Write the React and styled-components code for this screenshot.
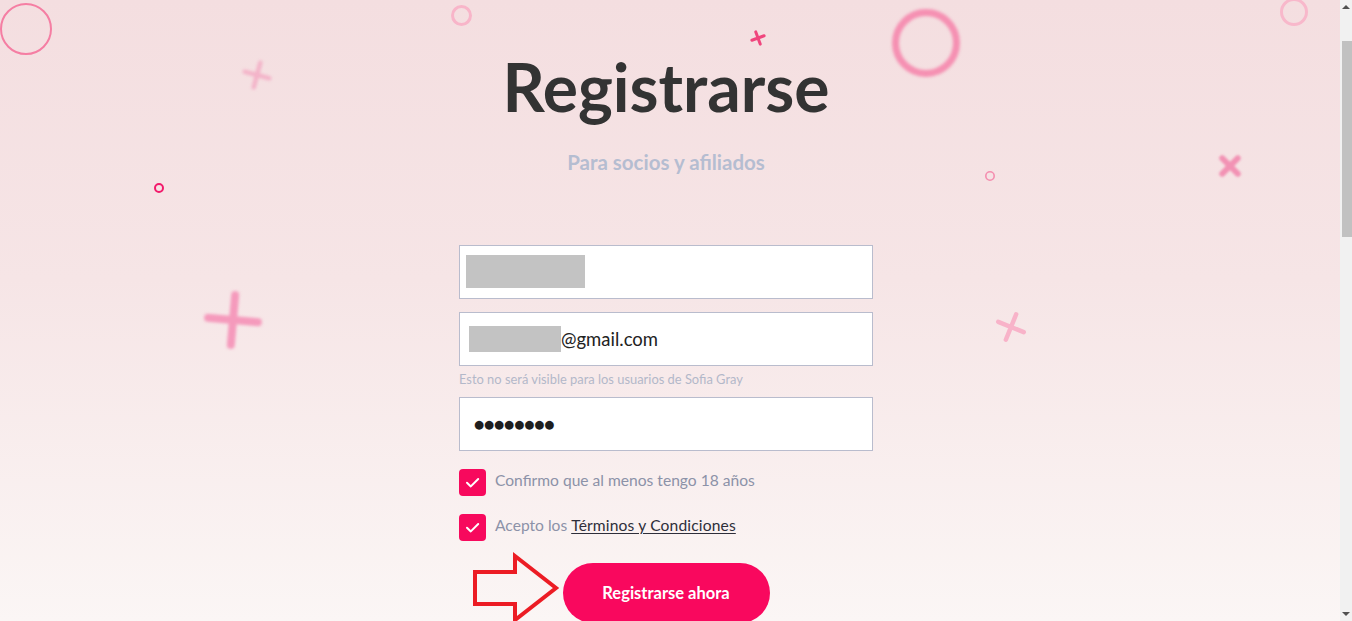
import React from "react";
import styled, { createGlobalStyle } from "styled-components";

const Global = createGlobalStyle`
  html, body { margin: 0; padding: 0; overflow: hidden; }
  body {
    font-family: Lato, "Noto Sans", Arial, sans-serif;
    background: #fbf6f5;
  }
`;

const Frame = styled.div`
  display: flex;
  height: 100vh;
  overflow: hidden;
`;

const Viewport = styled.div`
  position: relative;
  flex: 1;
  min-width: 0;
  overflow: hidden;
  background: linear-gradient(to bottom, #f4dee0 0%, #f6e5e6 45%, #fbf6f5 100%);
  padding-top: 54px;
  box-sizing: border-box;
`;

const ScrollBar = styled.div`
  width: 12px;
  flex: none;
  background: #f1f1f1;
  display: flex;
  flex-direction: column;
`;

const ScrollButton = styled.div`
  height: 14px;
  flex: none;
  display: flex;
  align-items: center;
  justify-content: center;
`;

const Tri = styled.span`
  width: 0;
  height: 0;
  border-left: 4px solid transparent;
  border-right: 4px solid transparent;
  ${(p) => (p.$down ? "border-top: 4px solid #505050;" : "border-bottom: 4px solid #505050;")}
`;

const Track = styled.div`
  flex: 1;
  display: flex;
  flex-direction: column;
  padding-left: 2px;
`;

const Thumb = styled.div`
  margin-top: ${(p) => p.$offset}px;
  height: ${(p) => p.$len}px;
  background: #c1c1c1;
`;

const Column = styled.main`
  width: 414px;
  margin: 0 auto;
  padding-right: 8px;
  display: flex;
  flex-direction: column;
  align-items: stretch;
`;

const Title = styled.h1`
  margin: 0;
  font-family: Lato, sans-serif;
  font-weight: 700;
  font-size: 66px;
  line-height: 1;
  color: #333333;
  text-align: center;
  white-space: nowrap;
`;

const Subtitle = styled.p`
  margin: 30px 0 0;
  font-weight: 700;
  font-size: 20.5px;
  line-height: 1.2;
  color: #b5bdd1;
  text-align: center;
`;

const Form = styled.form`
  margin-top: 70px;
  display: flex;
  flex-direction: column;
`;

const Field = styled.div`
  box-sizing: border-box;
  height: 54px;
  background: #ffffff;
  border: 1px solid #b9bccd;
  display: flex;
  align-items: ${(p) => (p.$top ? "flex-start" : "center")};
  padding-left: ${(p) => p.$pad}px;
  padding-top: ${(p) => (p.$top ? p.$top : 0)}px;
  margin-top: ${(p) => p.$mt || 0}px;
`;

const Redact = styled.span`
  display: inline-block;
  width: ${(p) => p.$w}px;
  height: ${(p) => p.$h}px;
  background: #c3c3c3;
  flex: none;
`;

const Value = styled.span`
  font-family: Lato, sans-serif;
  font-size: 18.5px;
  color: #222222;
`;

const Dots = styled.span`
  font-family: "DejaVu Sans", sans-serif;
  font-size: 11.5px;
  color: #1e1e1e;
`;

const Hint = styled.div`
  margin-top: 5px;
  margin-bottom: 9px;
  font-size: 12.9px;
  line-height: 17px;
  color: #b3b8c9;
`;

const CheckRow = styled.label`
  display: flex;
  align-items: center;
  gap: 9px;
  margin-top: 18px;
  font-size: 15.6px;
  color: #8c92a8;
`;

const CheckText = styled.span`
  padding-bottom: 5px;
`;

const Box = styled.span`
  width: 27px;
  height: 27px;
  border-radius: 4px;
  background: #f7095d;
  display: flex;
  align-items: center;
  justify-content: center;
  flex: none;
`;

const Link = styled.a`
  color: #2e2e3a;
  text-decoration: underline;
  text-underline-offset: 2px;
  letter-spacing: 0.15px;
`;

const ButtonRow = styled.div`
  position: relative;
  display: flex;
  justify-content: center;
  margin-top: 22px;
`;

const Button = styled.button`
  width: 207px;
  height: 60px;
  border: none;
  border-radius: 30px;
  background: #f9085e;
  color: #ffffff;
  font-family: Lato, sans-serif;
  font-weight: 700;
  font-size: 16.5px;
  cursor: pointer;
`;

const Arrow = styled.svg`
  position: absolute;
  left: 14px;
  top: -8px;
  overflow: visible;
`;

const Decor = styled.svg`
  position: absolute;
  left: ${(p) => p.$x - p.$s / 2}px;
  top: ${(p) => p.$y - p.$s / 2}px;
  width: ${(p) => p.$s}px;
  height: ${(p) => p.$s}px;
  overflow: visible;
  filter: ${(p) => (p.$blur ? `blur(${p.$blur}px)` : "none")};
  transform: rotate(${(p) => p.$rot || 0}deg);
`;

function Ring({ x, y, r, w, color, blur }) {
  const s = r * 2;
  return (
    <Decor $x={x} $y={y} $s={s} $blur={blur} viewBox={`0 0 ${s} ${s}`}>
      <circle cx={r} cy={r} r={r - w / 2} fill="none" stroke={color} strokeWidth={w} />
    </Decor>
  );
}

function Cross({ x, y, s, w, color, blur, rot }) {
  return (
    <Decor $x={x} $y={y} $s={s} $blur={blur} $rot={rot} viewBox={`0 0 ${s} ${s}`}>
      <path
        d={`M${s / 2} ${w / 2}V${s - w / 2}M${w / 2} ${s / 2}H${s - w / 2}`}
        stroke={color}
        strokeWidth={w}
        strokeLinecap="round"
        fill="none"
      />
    </Decor>
  );
}

function Check() {
  return (
    <svg width="27" height="27" viewBox="0 0 27 27">
      <path d="M8 13.8 L11.8 17.4 L19.2 10" fill="none" stroke="#fff" strokeWidth="2" strokeLinecap="round" strokeLinejoin="round" />
    </svg>
  );
}

export default function App() {
  return (
    <>
      <Global />
      <Frame>
        <Viewport>
          <Ring x={26} y={29} r={26} w={2} color="#f57ea3" />
          <Cross x={257} y={75} s={30} w={4.5} color="#f3b2c8" blur={1.5} rot={15} />
          <Ring x={461} y={15} r={10.5} w={3} color="#f8b5c9" />
          <Cross x={758} y={38} s={16} w={3} color="#f0457d" rot={-20} />
          <Ring x={926} y={43} r={34} w={7} color="#f590b2" blur={1.5} />
          <Ring x={990} y={176} r={5} w={1.6} color="#f48eaf" />
          <Cross x={1230} y={166} s={28} w={6} color="#f292b4" blur={1.3} rot={45} />
          <Ring x={1294} y={12} r={14} w={3} color="#f8b8cb" />
          <Ring x={159} y={188} r={5} w={2} color="#f21a6b" />
          <Cross x={233} y={320} s={58} w={8} color="#f59abc" blur={1.8} rot={5} />
          <Cross x={1011} y={327} s={32} w={4.5} color="#f8b3c9" rot={22} />
          <Column>
            <Title>Registrarse</Title>
            <Subtitle>Para socios y afiliados</Subtitle>
            <Form onSubmit={(e) => e.preventDefault()}>
              <Field $pad={6} $top={9}>
                <Redact $w={119} $h={33} />
              </Field>
              <Field $pad={9} $mt={13}>
                <Redact $w={92} $h={26} />
                <Value>@gmail.com</Value>
              </Field>
              <Hint>Esto no será visible para los usuarios de Sofia Gray</Hint>
              <Field $pad={14}>
                <Dots>●●●●●●●●</Dots>
              </Field>
              <CheckRow>
                <Box>
                  <Check />
                </Box>
                <CheckText>Confirmo que al menos tengo 18 años</CheckText>
              </CheckRow>
              <CheckRow>
                <Box>
                  <Check />
                </Box>
                <CheckText>
                  Acepto los <Link href="#">Términos y Condiciones</Link>
                </CheckText>
              </CheckRow>
              <ButtonRow>
                <Arrow width="86" height="68" viewBox="0 0 86 68">
                  <polygon
                    points="2,17 42,17 42,1 83,33 42,65 42,49 2,49"
                    fill="none"
                    stroke="#ec1c24"
                    strokeWidth="4"
                    strokeLinejoin="miter"
                  />
                </Arrow>
                <Button type="submit">Registrarse ahora</Button>
              </ButtonRow>
            </Form>
          </Column>
        </Viewport>
        <ScrollBar>
          <ScrollButton>
            <Tri />
          </ScrollButton>
          <Track>
            <Thumb $offset={27} $len={196} />
          </Track>
          <ScrollButton>
            <Tri $down />
          </ScrollButton>
        </ScrollBar>
      </Frame>
    </>
  );
}
